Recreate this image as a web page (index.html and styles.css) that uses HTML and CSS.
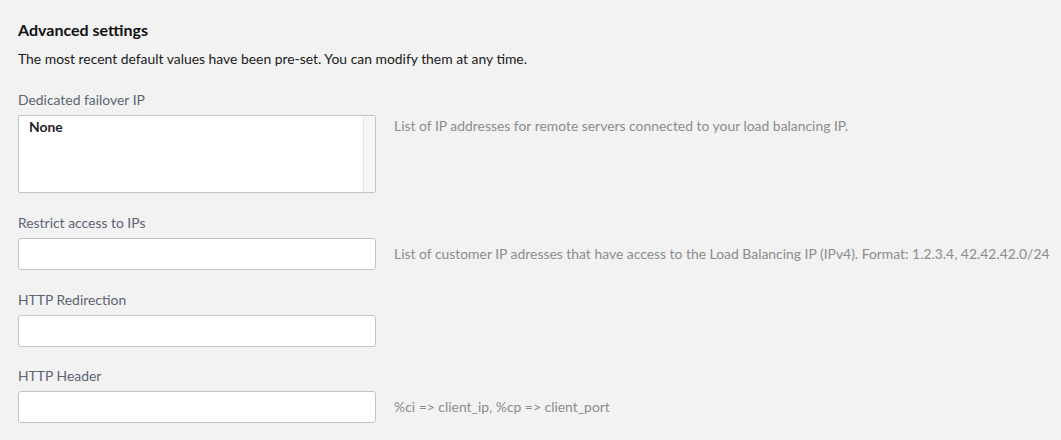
FILE: index.html
```html
<!DOCTYPE html>
<html>
<head>
<meta charset="utf-8">
<link rel="stylesheet" href="styles.css">
</head>
<body>
<section class="settings">
  <h2 class="title">Advanced settings</h2>
  <p class="intro">The most recent default values have been pre-set. You can modify them at any time.</p>

  <div class="group">
    <label class="label">Dedicated failover IP</label>
    <div class="row row-top">
      <div class="listbox">
        <div class="options"><div class="option">None</div></div>
        <div class="track"></div>
      </div>
      <p class="help help-top">List of IP addresses for remote servers connected to your load balancing IP.</p>
    </div>
  </div>

  <div class="group">
    <label class="label">Restrict access to IPs</label>
    <div class="row">
      <input class="input" type="text">
      <p class="help">List of customer IP adresses that have access to the Load Balancing IP (IPv4). Format: 1.2.3.4, 42.42.42.0/24</p>
    </div>
  </div>

  <div class="group">
    <label class="label">HTTP Redirection</label>
    <div class="row">
      <input class="input" type="text">
    </div>
  </div>

  <div class="group group-last">
    <label class="label">HTTP Header</label>
    <div class="row">
      <input class="input" type="text">
      <p class="help">%ci =&gt; client_ip, %cp =&gt; client_port</p>
    </div>
  </div>
</section>
</body>
</html>
```

FILE: styles.css
```css
html, body {
  margin: 0;
  padding: 0;
  background: #f2f2f2;
}
body {
  font-family: Lato, "Liberation Sans", sans-serif;
  color: #1a1a1a;
}
.settings {
  padding: 20px 0 0 18px;
}
.title {
  margin: 0;
  font-size: 16px;
  line-height: 20px;
  font-weight: 700;
  color: #111;
}
.intro {
  margin: 10px 0 0 0;
  font-size: 13.9px;
  line-height: 18px;
  color: #1a1a1a;
}
.group {
  margin-top: 21px;
}
.group:first-of-type {
  margin-top: 23px;
}
.group-last {
  margin-top: 20px;
}
.label {
  display: block;
  font-size: 13.9px;
  line-height: 18px;
  color: #5b6473;
  margin-bottom: 6px;
}
.row {
  display: flex;
  align-items: center;
}
.row-top {
  align-items: flex-start;
}
.listbox {
  flex-shrink: 0;
  box-sizing: border-box;
  width: 358px;
  height: 78px;
  background: #fff;
  border: 1px solid #c3c3c3;
  border-radius: 2px;
  display: flex;
}
.options {
  flex: 1;
  padding: 3px 10px;
}
.option {
  font-size: 13.9px;
  line-height: 16px;
  font-weight: 700;
  color: #1b1f2a;
}
.track {
  width: 11px;
  background: #f7f7f7;
  border-left: 1px solid #e6e6e6;
}
.input {
  flex-shrink: 0;
  box-sizing: border-box;
  width: 358px;
  height: 32px;
  margin: 0;
  padding: 0 8px;
  background: #fff;
  border: 1px solid #c3c3c3;
  border-radius: 3px;
  font: inherit;
  outline: none;
}
.help {
  margin: 0 0 0 18px;
  font-size: 13.9px;
  line-height: 18px;
  color: #8c8c8c;
  white-space: nowrap;
}
.help-top {
  margin-top: 2px;
}
```
